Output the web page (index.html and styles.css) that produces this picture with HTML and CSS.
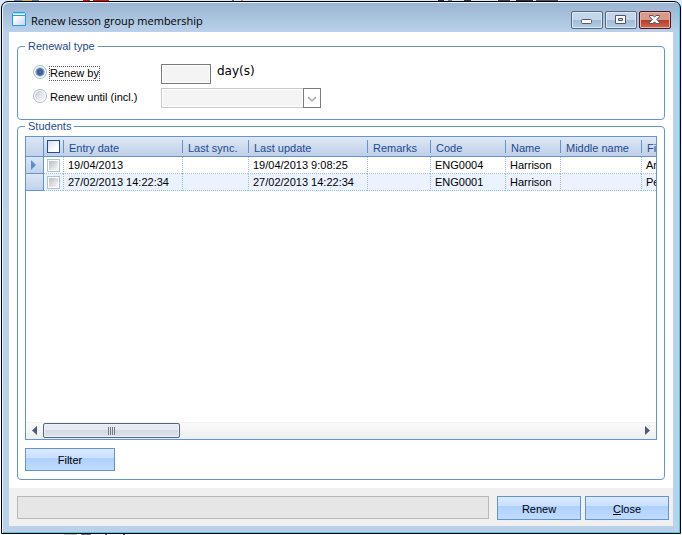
FILE: index.html
```
<!DOCTYPE html>
<html lang="en">
<head>
    <meta charset="utf-8" />
    <title>Renew lesson group membership</title>
    <link rel="stylesheet" href="styles.css">
</head>

<body>
<div class="window">
    <div class="titlebar">
        <svg class="appicon" width="14" height="14" viewBox="0 0 14 14">
            <defs><linearGradient id="paper" x1="0" y1="0" x2="1" y2="1">
                <stop offset="0.3" stop-color="#fff"/><stop offset="1" stop-color="#cfcdf0"/>
            </linearGradient></defs>
            <path d="M1.5 0.5H12.5L13.5 1.5V13.5H0.5V1.5Z" fill="url(#paper)" stroke="#1b9bfb"/>
            <path d="M1 1.5H13" stroke="#a8dcff"/>
            <path d="M1 3.5H13" stroke="#1b9bfb"/>
        </svg>
        <h1>Renew lesson group membership</h1>
        <button type="button" class="winbtn" aria-label="Minimize">
            <svg width="30" height="16" viewBox="0 0 30 16"><rect x="9.5" y="7.5" width="10" height="4" rx="1" fill="#fff" stroke="#535666"/></svg>
        </button>
        <button type="button" class="winbtn" aria-label="Maximize">
            <svg width="30" height="16" viewBox="0 0 30 16"><path d="M9.5 3.5H19.5V11.5H9.5ZM12.5 6.5V8.5H16.5V6.5Z" fill="#fff" fill-rule="evenodd" stroke="#535666"/></svg>
        </button>
        <button type="button" class="winbtn close" aria-label="Close window">
            <svg width="30" height="16" viewBox="0 0 30 16"><path d="M9.5 3.5H13L14.5 5.2L16 3.5H19.5V4.5L16.8 7.5L19.5 10.5V11.5H16L14.5 9.8L13 11.5H9.5V10.5L12.2 7.5L9.5 4.5Z" fill="#fff" stroke="#535666"/></svg>
        </button>
    </div>

    <form class="client" action="">
        <div class="main">
            <fieldset class="renewal">
                <legend>Renewal type</legend>
                <input type="radio" id="renewBy" name="renewType" class="radio" checked>
                <label for="renewBy"><span class="focus">Renew by</span></label>
                <div class="days">
                    <input type="text" id="days" class="daybox">
                    <label for="days" class="unit">day(s)</label>
                </div>
                <input type="radio" id="renewUntil" name="renewType" class="radio">
                <label for="renewUntil">Renew until (incl.)</label>
                <div class="combo">
                    <select class="until" aria-label="Renew until" disabled><option></option></select>
                    <span class="arrow"><svg width="16" height="18" viewBox="0 0 16 18"><path d="M4 8L8 12L12 8" fill="none" stroke="#a9a9a9" stroke-width="1.5"/></svg></span>
                </div>
            </fieldset>

            <fieldset class="students">
                <legend>Students</legend>
                <div class="grid">
                    <div class="rows">
                        <table>
                            <colgroup>
                                <col class="c-head"><col class="c-check"><col class="c-entry"><col class="c-sync"><col class="c-update">
                                <col class="c-remarks"><col class="c-code"><col class="c-name"><col class="c-middle"><col class="c-first">
                            </colgroup>
                            <thead>
                                <tr>
                                    <th class="rowhead"></th>
                                    <th class="tick"><input type="checkbox" class="checkall" aria-label="Select all"></th>
                                    <th><span>Entry date</span></th>
                                    <th><span>Last sync.</span></th>
                                    <th><span>Last update</span></th>
                                    <th><span>Remarks</span></th>
                                    <th><span>Code</span></th>
                                    <th><span>Name</span></th>
                                    <th><span>Middle name</span></th>
                                    <th><span>Fir</span></th>
                                </tr>
                            </thead>
                            <tbody>
                                <tr>
                                    <td class="rowhead"><svg width="5" height="10" viewBox="0 0 5 10"><path d="M0 0L5 5L0 10Z" fill="#5a8fd0"/></svg></td>
                                    <td class="tick"><input type="checkbox" class="check" aria-label="Select row 1"></td>
                                    <td>19/04/2013</td>
                                    <td></td>
                                    <td>19/04/2013 9:08:25</td>
                                    <td></td>
                                    <td>ENG0004</td>
                                    <td>Harrison</td>
                                    <td></td>
                                    <td>Ar</td>
                                </tr>
                                <tr>
                                    <td class="rowhead"></td>
                                    <td class="tick"><input type="checkbox" class="check" aria-label="Select row 2"></td>
                                    <td>27/02/2013 14:22:34</td>
                                    <td></td>
                                    <td>27/02/2013 14:22:34</td>
                                    <td></td>
                                    <td>ENG0001</td>
                                    <td>Harrison</td>
                                    <td></td>
                                    <td>Pe</td>
                                </tr>
                            </tbody>
                        </table>
                    </div>
                    <div class="scrollbar">
                        <svg width="5" height="9" viewBox="0 0 5 9"><path d="M5 0L0 4.5L5 9Z" fill="#4d5980"/></svg>
                        <div class="track"><div class="thumb"><svg width="8" height="8" viewBox="0 0 8 8"><path d="M0.5 0V8M2.5 0V8M4.5 0V8M6.5 0V8" stroke="#777b85"/></svg></div></div>
                        <svg width="5" height="9" viewBox="0 0 5 9"><path d="M0 0L5 4.5L0 9Z" fill="#4d5980"/></svg>
                    </div>
                </div>
                <button type="button" class="button filter">Filter</button>
            </fieldset>
        </div>

        <div class="footer">
            <div class="status"></div>
            <button type="button" class="button">Renew</button>
            <button type="button" class="button"><u>C</u>lose</button>
        </div>
    </form>
</div>
</body>
</html>
```

FILE: styles.css
```
* {box-sizing: border-box;}
body {
    margin: 0; padding: 1px; height: 100vh; display: flex; overflow: hidden;
    font-family: "Liberation Sans", Arial, sans-serif; font-size: 11px; line-height: 13px; color: #000;
    background:
        linear-gradient(90deg, transparent 14px, #4a8fc4 14px 22px, #d9b25a 22px 32px, #4a7fa8 32px 39px, transparent 39px 83px, #f00 83px 90px, #fff 90px 93px, #f00 93px 109px, transparent 109px 232px, #4b6f9c 232px 234px, transparent 234px 241px, #c58a4a 241px 243px, transparent 243px 438px, #333 438px 444px, transparent 444px 448px, #777 448px 452px, transparent 452px 464px, #333 464px 471px, transparent 471px 498px, #444 498px 510px, transparent 510px 516px, #333 516px 533px, transparent 533px 536px, #555 536px 558px, transparent 558px) 0 0 / 100% 1px no-repeat,
        linear-gradient(90deg, transparent 64px, #b8c4d0 64px 77px, transparent 77px 81px, #777 81px 91px, transparent 91px 105px, #777 105px 107px, transparent 107px 123px, #555 123px 125px, transparent 125px) 0 100% / 100% 1px no-repeat,
        linear-gradient(#dce9f7, #fff);
}
button, input, select {font: inherit; margin: 0; padding: 0;}

/* window frame */
.window {
    flex: 1; min-width: 0; display: flex; flex-direction: column; padding: 0 7px 7px;
    border: 1px solid #000; border-radius: 7px 7px 0 0;
    background: linear-gradient(#99b4d1, #b9d1ea 30px);
    box-shadow: inset 1px 1px #e8f3fc, inset -1px -1px #35d3ea;
}
.titlebar {display: flex; align-items: flex-start; gap: 2px; height: 30px; padding: 9px 2px 0 3px;}
.titlebar h1 {flex: 1; margin: 2px 0 0 3px; font: 11px/16px "Open Sans", sans-serif;}
.appicon {margin-top: 1px;}
.winbtn {
    width: 32px; height: 18px; border: 1px solid #56677d; border-radius: 2px;
    background: linear-gradient(#c3d6ea 8px, #a0bbd8 8px, #b5cde6); box-shadow: inset 0 0 0 1px #dce8f5;
}
.winbtn svg {display: block;}
.winbtn.close {border-color: #4d1620; background: linear-gradient(#d9998b 8px, #b93b21 8px, #c96a51); box-shadow: inset 0 0 0 1px #e5b3a9;}

.client {flex: 1; display: flex; flex-direction: column; background: #fff; min-height: 0;}
.main {flex: 1; display: flex; flex-direction: column; padding: 8px;}
fieldset {margin: 0; min-width: 0; border: 1px solid #6394cf; border-radius: 4px;}
legend {padding: 0 3px; color: #1e4a8f;}

/* renewal type */
.renewal {display: grid; grid-template-columns: 14px 108px 1fr; column-gap: 3px; row-gap: 4px; padding: 11px 15px;}
.renewal legend {margin-left: -8px;}
.radio {
    appearance: none; width: 14px; height: 14px; margin-top: 1px; border: 1px solid #a9c0de; border-radius: 50%;
    background: linear-gradient(135deg, #c4c8cd, #fff); box-shadow: inset 0 0 0 1px #fff;
}
.radio:checked {background: radial-gradient(circle, #41659a 3px, #dfe5ee 5px);}
.focus {display: inline-block; outline: 1px dotted #555;}
.renewal label {padding-top: 3px;}
.days {display: flex; gap: 6px;}
.daybox {width: 50px; height: 20px; border: 1px solid #7a7a7a; background: #f4f4f4; box-shadow: inset 0 0 0 1px #fff;}
.renewal .unit {padding: 0; font: 12px/14px "DejaVu Sans", Verdana, sans-serif;}
.combo {display: flex; width: 160px; height: 20px;}
.until {appearance: none; flex: 1; border: 1px solid #c8c8c8; border-right: 0; background: #f4f4f4; box-shadow: inset 0 0 0 1px #fff; border-radius: 0; opacity: 1;}
.arrow {width: 18px; border: 1px solid #7a7a7a; background: #fff;}
.arrow svg {display: block;}

/* students */
.students {flex: 1; display: flex; flex-direction: column; padding: 3px 7px 8px;}
.grid {flex: 1; display: flex; flex-direction: column; border: 1px solid #6394cf; overflow: hidden; min-height: 0;}
.rows {flex: 1; overflow: hidden;}
table {table-layout: fixed; width: 100%; border-collapse: separate; border-spacing: 0;}
.c-head {width: 18px;}
.c-check {width: 19px;}
.c-entry {width: 119px;}
.c-sync {width: 66px;}
.c-update {width: 119px;}
.c-remarks {width: 63px;}
.c-code {width: 75px;}
.c-name {width: 55px;}
.c-middle {width: 81px;}
th {
    height: 20px; padding: 2px 0 0; font-weight: normal; text-align: left; color: #1e4a8f; white-space: nowrap; overflow: hidden;
    background: linear-gradient(#e1eaf5, #cbd9ed 11px, #bfd0ea); border-bottom: 1px solid #6394cf;
}
th span {display: block; height: 13px; padding-left: 6px; line-height: 15px;}
th + th + th {background-image: linear-gradient(#6394cf, #6394cf), linear-gradient(#e1eaf5, #cbd9ed 11px, #bfd0ea); background-size: 1px 13px, auto; background-position: 0 3px, 0 0; background-repeat: no-repeat;}
td {height: 17px; padding: 0 0 0 4px; border-left: 1px dotted #9ebbe0; border-bottom: 1px dotted #9ebbe0; white-space: nowrap; overflow: hidden; line-height: 14px;}
tbody tr:nth-child(even) td {background: #eaf3ff;}
th.rowhead, tbody tr td.rowhead {border: 0; border-right: 1px solid #6394cf; border-bottom: 1px solid #6394cf; background: linear-gradient(#dce6f4, #c1d2eb);}
td.rowhead svg {display: block; margin-left: 1px;}
th.tick, td.tick {padding: 0 0 0 3px; border-left: 0;}
.checkall, .check {appearance: none; display: block; width: 13px; height: 13px; border: 1px solid #2a4d7c; background: linear-gradient(135deg, #d5dce8, #fff 70%);}
.check {border-color: #a9c0de; background: linear-gradient(135deg, #b4b8bd, #fff); box-shadow: inset 0 0 0 1px #fff;}

.scrollbar {display: flex; align-items: center; gap: 6px; height: 17px; padding: 0 6px; background: linear-gradient(#e6e9ec, #fafafa 1px, #eeeff0);}
.track {flex: 1;}
.thumb {
    display: flex; align-items: center; justify-content: center; width: 23%; height: 15px;
    border: 1px solid #53658b; border-radius: 2px;
    background: linear-gradient(#e6ebf2 6px, #d2dae4 6px, #dde4ec); box-shadow: inset 0 0 0 1px #edf1f6;
}

.button {
    height: 24px; padding-top: 2px; border: 1px solid #6394cf; color: #000;
    background: linear-gradient(#ddebff, #c8dfff 9px, #aed0ff 9px, #c0dbff);
}
.filter {width: 90px; height: 23px; margin-top: 8px;}

.footer {display: flex; gap: 4px; padding: 8px 4px 6px 8px; background: #f0f0f0;}
.status {flex: 1; height: 23px; margin-right: 4px; border: 1px solid #b8b8b8; background: #e6e6e6;}
.footer .button {width: 84px;}
```
